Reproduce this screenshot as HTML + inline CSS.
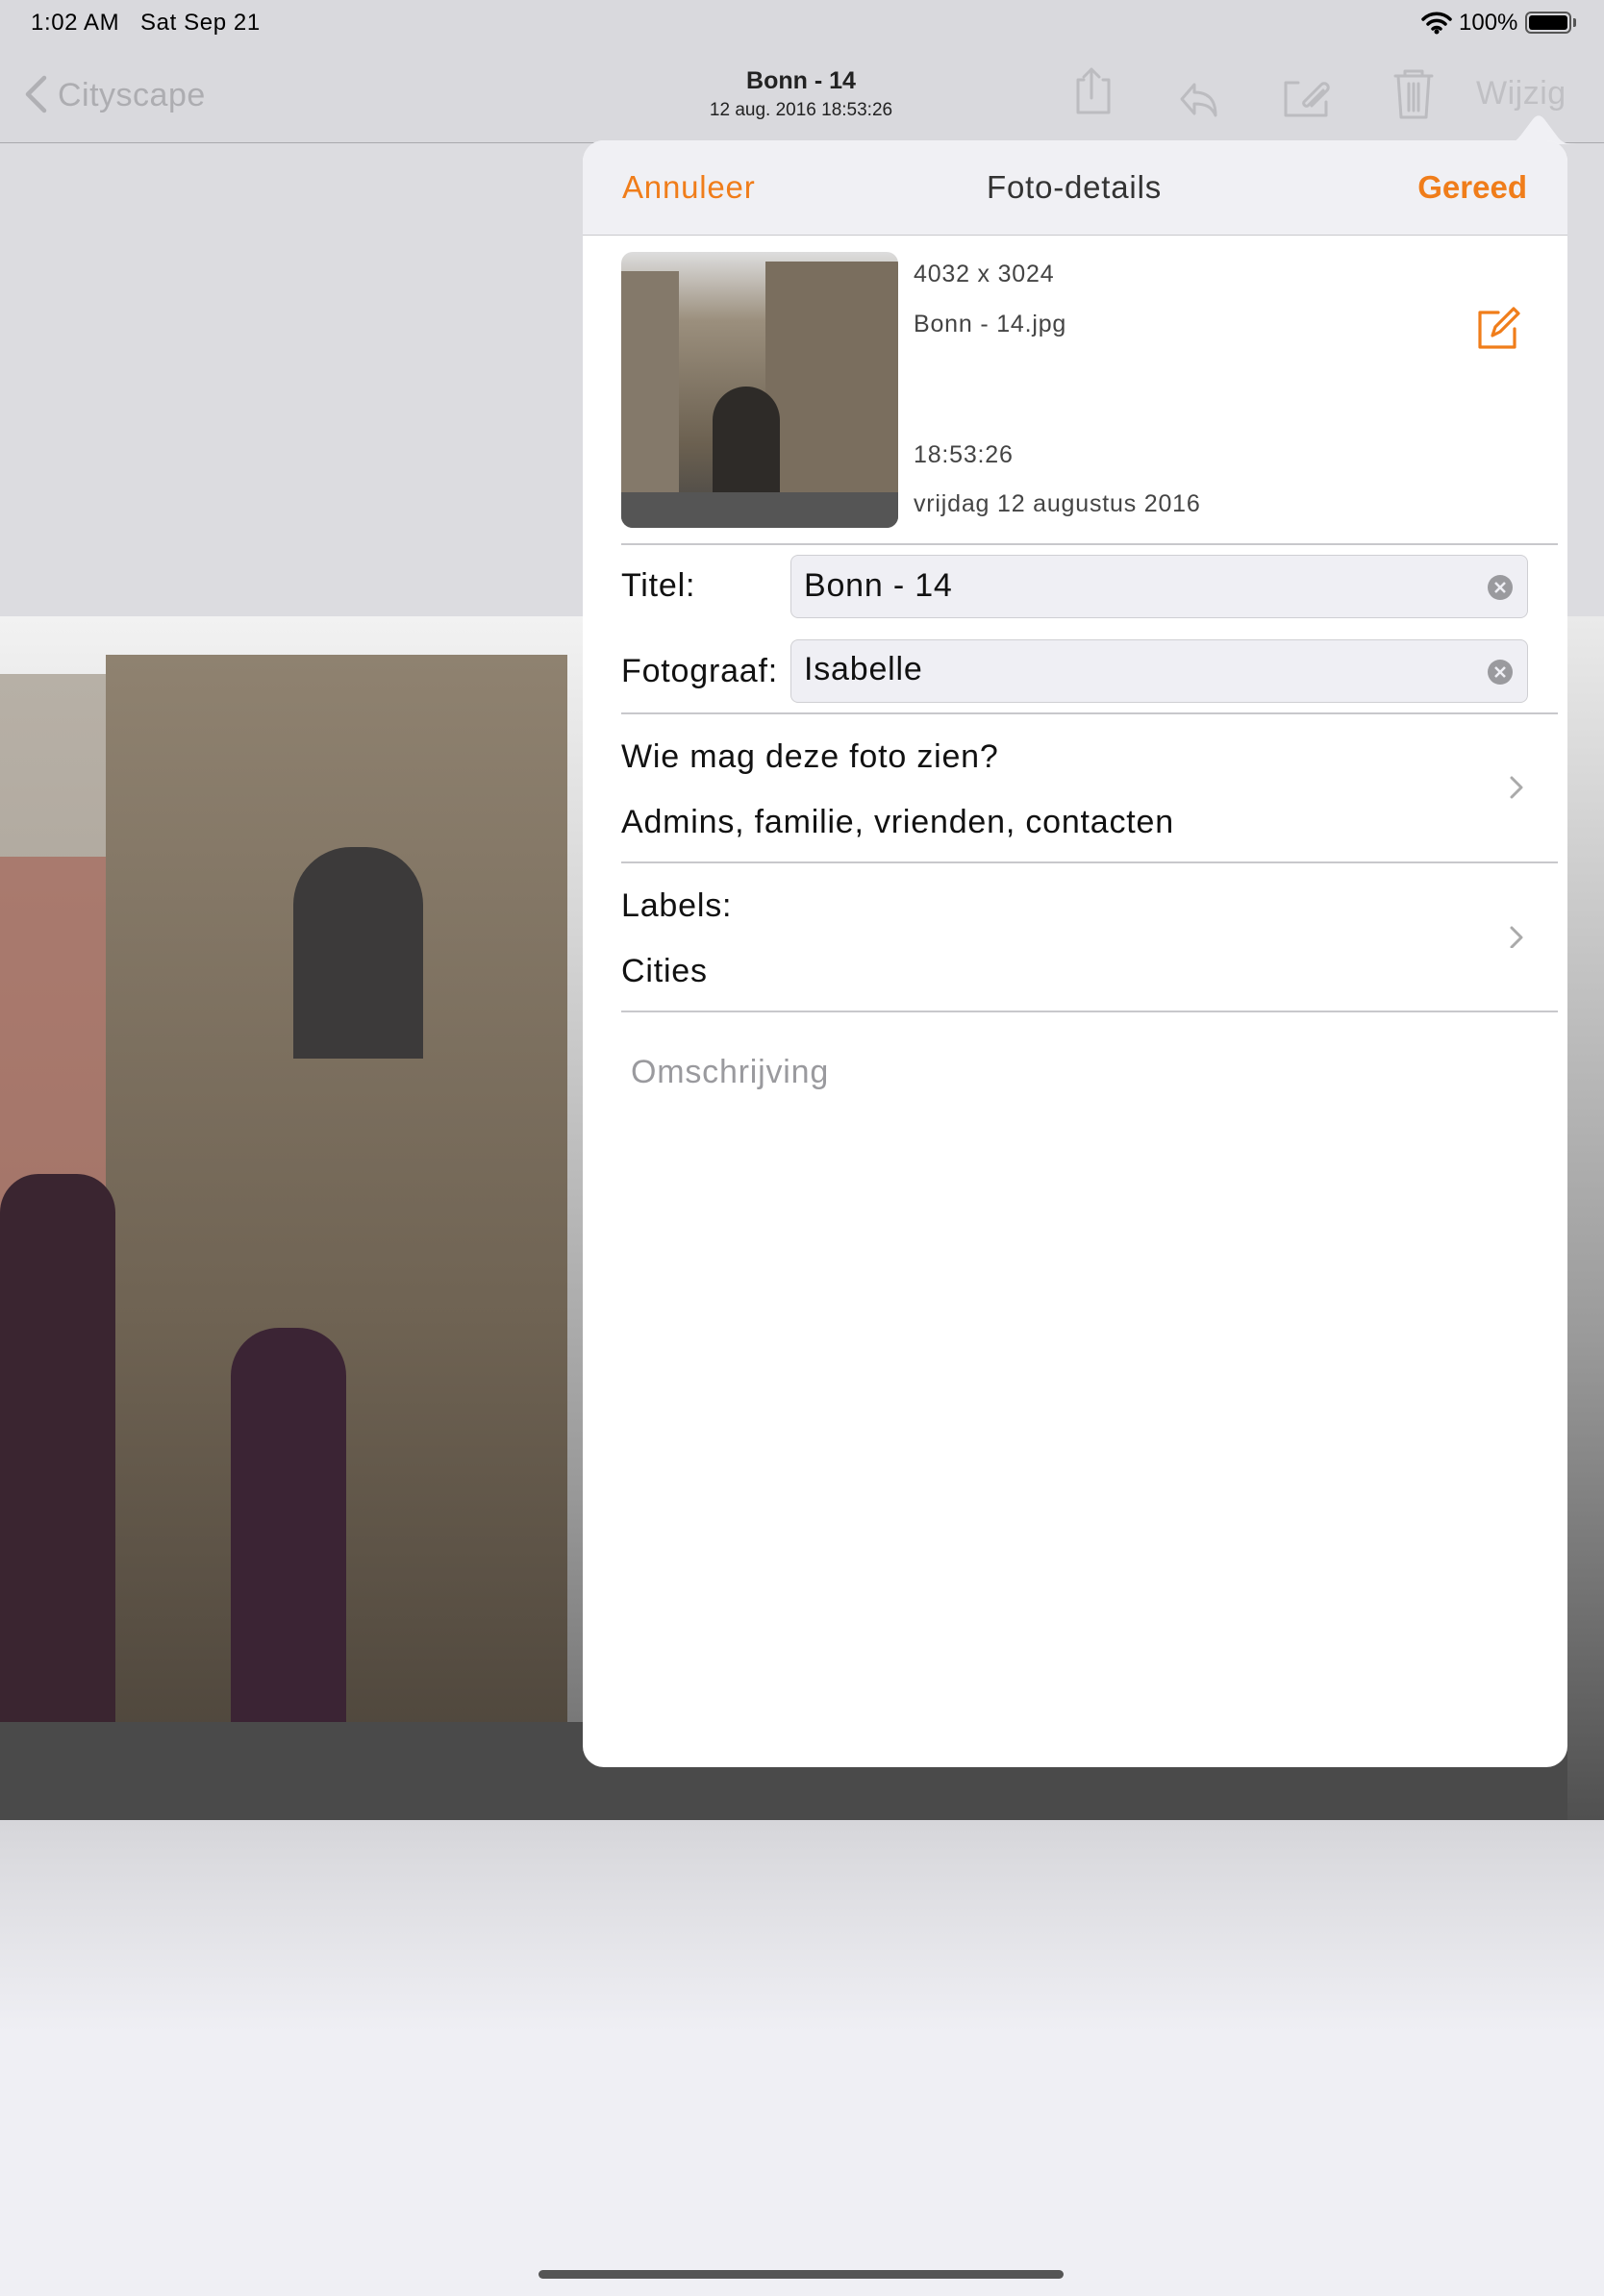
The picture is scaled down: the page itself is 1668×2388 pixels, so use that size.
<!DOCTYPE html>
<html><head><meta charset="utf-8"><style>
*{margin:0;padding:0;box-sizing:border-box}
body{width:1668px;height:2388px;overflow:hidden;position:relative;font-family:"Liberation Sans",sans-serif;background:#efeff4}
.abs{position:absolute}
.t{position:absolute;white-space:nowrap}
.pop .t{letter-spacing:0.8px}
</style></head><body>
<!-- background -->
<div class="abs" style="left:0;top:0;width:1668px;height:148px;background:#d9d9dd"></div>
<div class="abs" style="left:0;top:148px;width:1668px;height:1px;background:#a9a9ad"></div>
<div class="abs" style="left:0;top:149px;width:1668px;height:492px;background:#dcdce0"></div>
<div class="abs" style="left:0;top:1893px;width:1668px;height:495px;background:linear-gradient(#d6d6da,#efeff4 220px)"></div>
<!-- photo -->
<div class="abs" style="left:0;top:641px;width:1668px;height:1252px;background:linear-gradient(#f2f2f2,#d8d8d8 300px,#9a9a9a 900px,#6a6a6a);overflow:hidden">
  <div class="abs" style="left:0;top:60px;width:200px;height:1100px;background:linear-gradient(#b7b0a6,#9a9186)"></div>
  <div class="abs" style="left:0;top:250px;width:150px;height:520px;background:#a45a4c;opacity:.6"></div>
  <div class="abs" style="left:110px;top:40px;width:480px;height:1150px;background:linear-gradient(#8f8270,#6f6353 60%,#4e463c)"></div>
  <div class="abs" style="left:305px;top:240px;width:135px;height:220px;background:#3c3a3a;border-radius:60px 60px 0 0"></div>
  <div class="abs" style="left:0;top:580px;width:120px;height:620px;background:#3a2530;border-radius:40px 40px 0 0"></div>
  <div class="abs" style="left:240px;top:740px;width:120px;height:420px;background:#3b2434;border-radius:50px 50px 0 0"></div>
  <div class="abs" style="left:0;top:1150px;width:1668px;height:102px;background:#4a4a4a"></div>
  <div class="abs" style="left:1630px;top:0;width:38px;height:1252px;background:linear-gradient(#eaeaea,#9a9a9a 60%,#505050)"></div>
</div>
<!-- status bar -->
<div class="t" style="left:32px;top:10px;font-size:24px;color:#000;letter-spacing:0.6px">1:02 AM&nbsp;&nbsp;&nbsp;Sat Sep 21</div>
<div class="t" style="left:1517px;top:10px;font-size:24px;color:#000">100%</div>
<svg class="abs" style="left:1478px;top:12px" width="32" height="24" viewBox="0 0 32 24"><path d="M2 8a20 20 0 0 1 28 0M7 13a13 13 0 0 1 18 0M12 18a6 6 0 0 1 8 0" stroke="#000" stroke-width="3.5" fill="none" stroke-linecap="round"/><circle cx="16" cy="21" r="2.5"/></svg>
<div class="abs" style="left:1586px;top:12px;width:48px;height:23px;border:2px solid #555;border-radius:6px;padding:2px"><div style="width:100%;height:100%;background:#000;border-radius:3px"></div></div>
<div class="abs" style="left:1636px;top:19px;width:3px;height:9px;background:#555;border-radius:0 2px 2px 0"></div>
<!-- nav -->
<svg class="abs" style="left:24px;top:78px" width="28" height="40" viewBox="0 0 28 40"><path d="M22 3L5 20l17 17" stroke="#b0b0b4" stroke-width="4.5" fill="none" stroke-linecap="round" stroke-linejoin="round"/></svg>
<div class="t" style="left:60px;top:80px;font-size:34px;color:#adadb1;letter-spacing:0.5px">Cityscape</div>
<div class="t" style="left:733px;top:70px;width:200px;text-align:center;font-size:25px;font-weight:bold;color:#222">Bonn - 14</div>
<div class="t" style="left:683px;top:104px;width:300px;text-align:center;font-size:19px;color:#222">12 aug. 2016 18:53:26</div>
<svg class="abs" style="left:1100px;top:66px" width="420" height="60" viewBox="0 0 420 60" fill="none" stroke="#bcbcc0" stroke-width="3" stroke-linecap="round" stroke-linejoin="round">
<g transform="translate(7,0)"><path d="M20 17h-6v34h32V17h-6M28 6v30M20 14l8-8 8 8"/></g>
<g transform="translate(9,0)"><path d="M133 22l-13 15 13 15V42c12 0 18 3 22 12 0-18-9-24-22-24z"/></g>
<g transform="translate(12,0)"><path d="M238 20h-13v34h42V40M252 44l16-16a4 4 0 0 0-6-6l-18 18a3 3 0 0 0 4 4l16-16"/></g>
<g transform="translate(38,0)"><path d="M313 13h38M323 13V8h18v5M316 13l3 43h26l3-43M327 21v28M332 21v28M337 21v28"/></g>
</svg>
<div class="t" style="left:1535px;top:78px;font-size:34px;color:#c0c0c4;letter-spacing:0.5px">Wijzig</div>
<!-- popover -->
<svg class="abs" style="left:1562px;top:118px" width="80" height="32" viewBox="0 0 80 32"><path d="M0 32c12 0 14-3 20-10l12-16c4-5 8-5 12 0l12 16c6 8 8 10 24 10z" fill="#f0f0f4"/></svg>
<div class="abs pop" style="left:606px;top:146px;width:1024px;height:1692px;background:#fff;border-radius:22px;overflow:hidden">
  <div class="abs" style="left:0;top:0;width:1024px;height:99px;background:#f0f0f4;border-bottom:1px solid #c8c8cc"></div>
  <div class="t" style="left:41px;top:30px;font-size:33px;color:#f07d1a">Annuleer</div>
  <div class="t" style="left:361px;top:30px;width:300px;text-align:center;font-size:33px;color:#333">Foto-details</div>
  <div class="t" style="right:42px;top:30px;font-size:33px;font-weight:bold;color:#f07d1a;letter-spacing:0">Gereed</div>
  <!-- thumb -->
  <div class="abs" style="left:40px;top:116px;width:288px;height:287px;border-radius:12px;overflow:hidden;background:linear-gradient(#ddd,#9b8f7d 25%,#6b6050 70%,#444)">
    <div class="abs" style="left:150px;top:10px;width:138px;height:250px;background:#7a6e5e"></div>
    <div class="abs" style="left:95px;top:140px;width:70px;height:110px;background:#2e2b28;border-radius:35px 35px 0 0"></div>
    <div class="abs" style="left:0;top:20px;width:60px;height:240px;background:#84796a"></div>
    <div class="abs" style="left:0;top:250px;width:288px;height:37px;background:#555"></div>
  </div>
  <div class="t" style="left:344px;top:125px;font-size:25px;color:#444">4032 x 3024</div>
  <div class="t" style="left:344px;top:177px;font-size:25px;color:#444">Bonn - 14.jpg</div>
  <div class="t" style="left:344px;top:313px;font-size:25px;color:#444">18:53:26</div>
  <div class="t" style="left:344px;top:364px;font-size:25px;color:#444">vrijdag 12 augustus 2016</div>
  <svg class="abs" style="left:926px;top:170px" width="50" height="50" viewBox="0 0 50 50" fill="none" stroke="#f07d1a" stroke-width="3.2" stroke-linecap="round" stroke-linejoin="round"><path d="M26 9H7v36h36V26"/><path d="M20 33l3-9L42 5l5 5-19 19z"/></svg>
  <div class="abs" style="left:40px;top:419px;width:974px;height:2px;background:#c8c8cc"></div>
  <div class="t" style="left:40px;top:444px;font-size:34px;color:#111">Titel:</div>
  <div class="abs" style="left:216px;top:431px;width:767px;height:66px;background:#efeff4;border:1px solid #cfcfd3;border-radius:8px"></div>
  <div class="t" style="left:230px;top:444px;font-size:34px;color:#111">Bonn - 14</div>
  <div class="t" style="left:40px;top:533px;font-size:34px;color:#111">Fotograaf:</div>
  <div class="abs" style="left:216px;top:519px;width:767px;height:66px;background:#efeff4;border:1px solid #cfcfd3;border-radius:8px"></div>
  <div class="t" style="left:230px;top:531px;font-size:34px;color:#111">Isabelle</div>
  <svg class="abs" style="left:940px;top:451px" width="28" height="116" viewBox="0 0 28 116"><circle cx="14" cy="14" r="13" fill="#9a9a9e"/><path d="M9 9l10 10M19 9L9 19" stroke="#efeff4" stroke-width="2.5"/><circle cx="14" cy="102" r="13" fill="#9a9a9e"/><path d="M9 97l10 10M19 97L9 107" stroke="#efeff4" stroke-width="2.5"/></svg>
  <div class="abs" style="left:40px;top:595px;width:974px;height:2px;background:#c8c8cc"></div>
  <div class="t" style="left:40px;top:622px;font-size:34px;color:#111">Wie mag deze foto zien?</div>
  <div class="t" style="left:40px;top:690px;font-size:34px;color:#111">Admins, familie, vrienden, contacten</div>
  <div class="abs" style="left:40px;top:750px;width:974px;height:2px;background:#c8c8cc"></div>
  <div class="t" style="left:40px;top:777px;font-size:34px;color:#111">Labels:</div>
  <div class="t" style="left:40px;top:845px;font-size:34px;color:#111">Cities</div>
  <svg class="abs" style="left:962px;top:660px" width="18" height="180" viewBox="0 0 18 180" fill="none" stroke="#aaa" stroke-width="3" stroke-linecap="round" stroke-linejoin="round"><path d="M4 3l10 10L4 23M4 159l10 10-10 10"/></svg>
  <div class="abs" style="left:40px;top:905px;width:974px;height:2px;background:#c8c8cc"></div>
  <div class="t" style="left:50px;top:950px;font-size:34px;color:#9a9a9e">Omschrijving</div>
</div>
<div class="abs" style="left:560px;top:2361px;width:546px;height:9px;border-radius:5px;background:#555"></div>
</body></html>
